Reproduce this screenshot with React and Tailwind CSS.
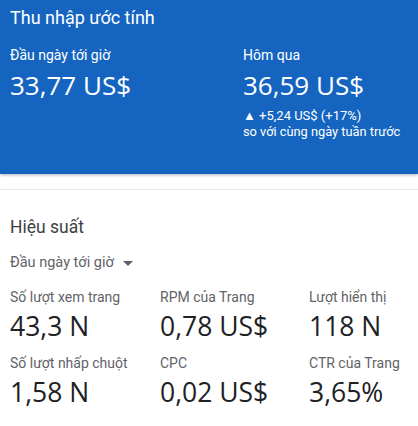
import React from "react";

const metrics = [
  { label: "Số lượt xem trang", value: "43,3 N" },
  { label: "RPM của Trang", value: "0,78 US$" },
  { label: "Lượt hiển thị", value: "118 N" },
  { label: "Số lượt nhấp chuột", value: "1,58 N" },
  { label: "CPC", value: "0,02 US$" },
  { label: "CTR của Trang", value: "3,65%" },
];

export default function App() {
  return (
    <div className="w-[418px] h-[426px] bg-white overflow-hidden font-['Roboto',sans-serif]">
      {/* Earnings */}
      <div className="h-[174px] bg-[#1565c0] text-white px-[10px] pt-[6px] shadow-[0_1px_3px_rgba(0,0,0,0.3)]">
        <h1 className="text-[18px] leading-[24px]">Thu nhập ước tính</h1>
        <div className="flex mt-[16px]">
          <div className="w-[233px]">
            <div className="text-[14px] leading-[18px]">Đầu ngày tới giờ</div>
            <div className="text-[26px] leading-[32px] mt-[5px] font-['Open_Sans',sans-serif]">33,77 US$</div>
          </div>
          <div>
            <div className="text-[14px] leading-[18px]">Hôm qua</div>
            <div className="text-[26px] leading-[32px] mt-[5px] font-['Open_Sans',sans-serif]">36,59 US$</div>
            <div className="text-[13px] leading-[16px] mt-[7px]">▲ +5,24 US$ (+17%)</div>
            <div className="text-[12.8px] leading-[16px]">so với cùng ngày tuần trước</div>
          </div>
        </div>
      </div>

      <div className="h-[15px]" />
      <div className="border-t border-[#e8e8e8]" />

      {/* Performance */}
      <div className="px-[10px] pt-[26px]">
        <h2 className="text-[17.5px] leading-[22px] text-[#3c4043]">Hiệu suất</h2>
        <div className="flex items-center gap-[9px] mt-[16px] text-[14.5px] leading-[18px] text-[#5f6368]">
          <span>Đầu ngày tới giờ</span>
          <svg width="10" height="5" viewBox="0 0 10 5" className="mt-[1px]">
            <path d="M0 0 L10 0 L5 5 Z" fill="#5f6368" />
          </svg>
        </div>
        <div className="grid grid-cols-[150px_149px_1fr] mt-[16px] gap-y-[12px]">
          {metrics.map((m) => (
            <div key={m.label}>
              <div className="text-[14px] leading-[18px] text-[#5f6368] whitespace-nowrap">{m.label}</div>
              <div className="text-[26.5px] leading-[32px] mt-[4px] text-[#202124] font-['Open_Sans',sans-serif]">{m.value}</div>
            </div>
          ))}
        </div>
      </div>
    </div>
  );
}
